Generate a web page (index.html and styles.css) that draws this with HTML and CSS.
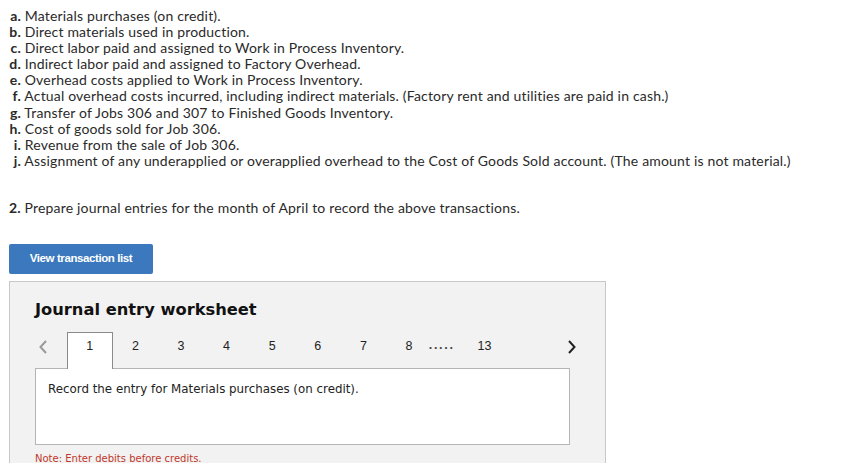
FILE: index.html
```html
<!DOCTYPE html>
<html>
<head>
<meta charset="utf-8">
<link rel="stylesheet" href="styles.css">
</head>
<body>
<div class="page">
  <ul class="items">
    <li><b class="lbl">a.</b> Materials purchases (on credit).</li>
    <li><b class="lbl">b.</b> Direct materials used in production.</li>
    <li><b class="lbl">c.</b> Direct labor paid and assigned to Work in Process Inventory.</li>
    <li><b class="lbl">d.</b> Indirect labor paid and assigned to Factory Overhead.</li>
    <li><b class="lbl">e.</b> Overhead costs applied to Work in Process Inventory.</li>
    <li><b class="lbl">f.</b> Actual overhead costs incurred, including indirect materials. (Factory rent and utilities are paid in cash.)</li>
    <li><b class="lbl">g.</b> Transfer of Jobs 306 and 307 to Finished Goods Inventory.</li>
    <li><b class="lbl">h.</b> Cost of goods sold for Job 306.</li>
    <li><b class="lbl">i.</b> Revenue from the sale of Job 306.</li>
    <li><b class="lbl">j.</b> Assignment of any underapplied or overapplied overhead to the Cost of Goods Sold account. (The amount is not material.)</li>
  </ul>
  <p class="task"><b>2.</b> Prepare journal entries for the month of April to record the above transactions.</p>
  <button class="btn">View transaction list</button>
  <div class="panel">
    <h2 class="title">Journal entry worksheet</h2>
    <div class="tabs">
      <span class="arrow prev"><svg width="10" height="14" viewBox="0 0 10 14"><path d="M8 1 L2.5 7 L8 13" fill="none" stroke="#9a9a9a" stroke-width="2"/></svg></span>
      <span class="tab active">1</span>
      <span class="tab">2</span>
      <span class="tab">3</span>
      <span class="tab">4</span>
      <span class="tab">5</span>
      <span class="tab">6</span>
      <span class="tab">7</span>
      <span class="tab">8</span>
      <span class="dots">.....</span>
      <span class="tab">13</span>
      <span class="arrow next"><svg width="10" height="14" viewBox="0 0 10 14"><path d="M2 1 L7.5 7 L2 13" fill="none" stroke="#222" stroke-width="2"/></svg></span>
    </div>
    <div class="entry">Record the entry for Materials purchases (on credit).</div>
    <p class="note">Note: Enter debits before credits.</p>
  </div>
</div>
</body>
</html>
```
FILE: styles.css
```css
html, body {
  margin: 0;
  padding: 0;
  background: #fff;
}
.page {
  padding: 8px 9px 0;
  font-family: "Lato", "Open Sans", sans-serif;
  font-size: 14px;
  letter-spacing: 0.18px;
  color: #2a2a2a;
}
.items {
  list-style: none;
  margin: 0;
  padding: 0;
}
.items li {
  line-height: 16.1px;
  white-space: nowrap;
}
.lbl {
  display: inline-block;
  width: 12px;
  text-align: right;
}
.task {
  margin: 31px 0 0;
  line-height: 16px;
}
.btn {
  display: block;
  margin-top: 28px;
  width: 144px;
  height: 30px;
  border: none;
  border-radius: 2px;
  background: #3b78be;
  color: #fff;
  font-family: "Liberation Sans", Arial, sans-serif;
  font-weight: bold;
  font-size: 11.5px;
  letter-spacing: -0.4px;
  padding: 0 0 2px;
}
.panel {
  margin-top: 7px;
  height: 200px;
  box-sizing: border-box;
  width: 597px;
  background: #f2f2f2;
  border: 1px solid #c8c8c8;
  border-bottom: none;
  padding: 17px 25px 0;
  letter-spacing: 0;
}
.title {
  margin: 0;
  font-family: "DejaVu Sans", Verdana, sans-serif;
  font-weight: bold;
  font-size: 16.3px;
  line-height: 22px;
  color: #111;
}
.tabs {
  display: flex;
  align-items: stretch;
  height: 36px;
  margin-top: 11px;
  width: 545px;
  font-family: "Liberation Sans", Arial, sans-serif;
  font-size: 12.5px;
  line-height: 14px;
  color: #222;
}
.arrow {
  display: flex;
  align-items: flex-start;
  padding-top: 8px;
  box-sizing: border-box;
}
.prev {
  width: 32px;
  padding-left: 3px;
}
.next {
  margin-left: auto;
  padding-right: 3px;
}
.tab {
  width: 45.6px;
  display: flex;
  align-items: flex-start;
  justify-content: center;
  box-sizing: border-box;
  padding-top: 7px;
}
.tab.active {
  background: #fff;
  border: 1px solid #8a8a8a;
  border-bottom: none;
  padding-top: 6px;
  position: relative;
  z-index: 1;
  margin-bottom: -1px;
  height: 37px;
}
.dots {
  display: flex;
  align-items: flex-start;
  width: 33px;
  margin-left: -3px;
  padding-top: 6px;
  font-weight: bold;
  letter-spacing: 1.7px;
  color: #444;
}
.entry {
  width: 535px;
  height: 77px;
  box-sizing: border-box;
  background: #fff;
  border: 1px solid #b5b5b5;
  padding: 12px 12px 0;
  font-family: "DejaVu Sans", Tahoma, sans-serif;
  font-size: 11.85px;
  line-height: 16px;
  color: #222;
}
.note {
  margin: 8px 0 0;
  font-family: "DejaVu Sans", Tahoma, sans-serif;
  font-size: 10px;
  line-height: 12px;
  color: #c0392b;
}
```
